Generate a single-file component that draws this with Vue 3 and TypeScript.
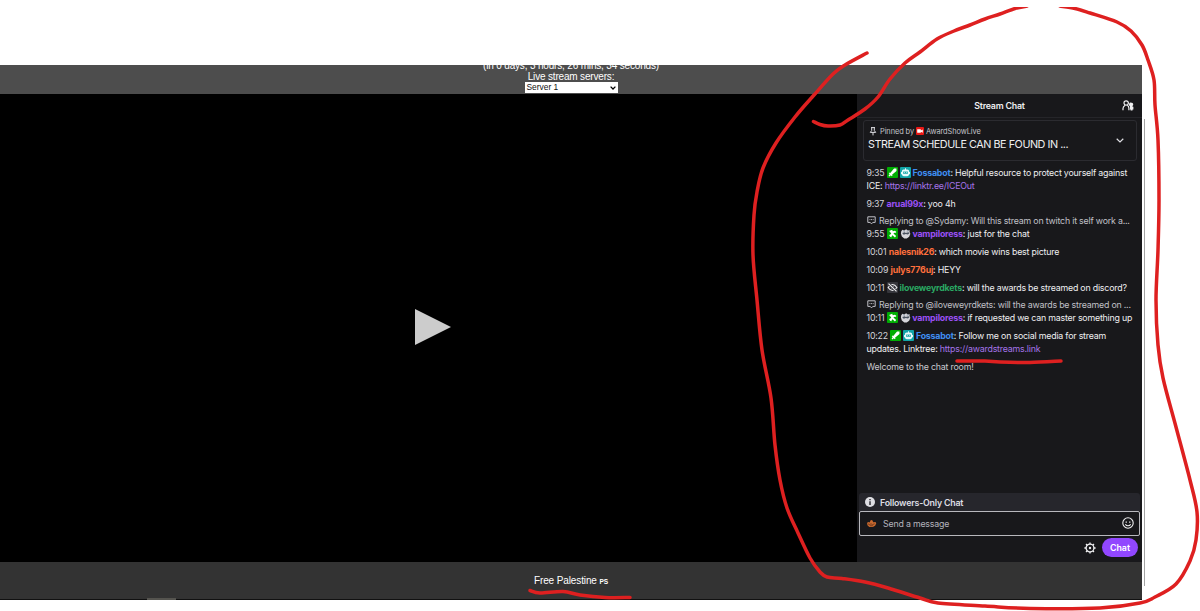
<script setup lang="ts">
import { ref } from "vue";
defineOptions({ name: "StreamPage" });

type Badge = "sword" | "bot" | "puzzle" | "raccoon" | "muted";
interface ChatMessage {
  time: string;
  user: string;
  color: string;
  badges: Badge[];
  text: string;
  link?: string;
  reply?: string;
}
type Point = [number, number];

const server = ref("Server 1");
const draft = ref("");

const messages: ChatMessage[] = [
  {
    time: "9:35",
    user: "Fossabot",
    color: "blue",
    badges: ["sword", "bot"],
    text: "Helpful resource to protect yourself against ICE: ",
    link: "https://linktr.ee/ICEOut",
  },
  { time: "9:37", user: "arual99x", color: "purple", badges: [], text: "yoo 4h" },
  {
    time: "9:55",
    user: "vampiloress",
    color: "purple",
    badges: ["puzzle", "raccoon"],
    text: "just for the chat",
    reply: "Replying to @Sydamy: Will this stream on twitch it self work a...",
  },
  { time: "10:01", user: "nalesnik26", color: "orange", badges: [], text: "which movie wins best picture" },
  { time: "10:09", user: "julys776uj", color: "orange", badges: [], text: "HEYY" },
  { time: "10:11", user: "iloveweyrdkets", color: "green", badges: ["muted"], text: "will the awards be streamed on discord?" },
  {
    time: "10:11",
    user: "vampiloress",
    color: "purple",
    badges: ["puzzle", "raccoon"],
    text: "if requested we can master something up",
    reply: "Replying to @iloveweyrdkets: will the awards be streamed on ...",
  },
  {
    time: "10:22",
    user: "Fossabot",
    color: "blue",
    badges: ["sword", "bot"],
    text: "Follow me on social media for stream updates. Linktree: ",
    link: "https://awardstreams.link",
  },
];

// freehand marker strokes
const strokes: Point[][] = [
  [
    [867, 53], [845, 65], [833, 74], [814, 95], [795, 117], [776, 143], [763, 168], [757, 192], [754, 215],
    [753, 255], [757, 300], [762, 350], [771, 398], [775, 445], [780, 480], [787, 508], [798, 533], [810, 558],
    [820, 572], [827, 577], [842, 578.5], [865, 582], [888, 588], [920, 598], [938, 603], [985, 606], [1030, 608.5],
    [1100, 608], [1140, 603], [1155, 597], [1176, 584], [1190, 561], [1196, 540], [1197, 512], [1190, 480],
    [1176, 427], [1163, 378], [1158, 345], [1156, 300], [1158, 250], [1159, 200], [1158, 140], [1155, 105],
    [1154, 80], [1148, 60], [1142, 45], [1131, 31], [1117, 22], [1090, 13], [1075, 8.5], [1060, 6],
  ],
  [
    [1027, 6], [1015, 8.5], [1000, 14], [985, 19], [970, 25], [954, 31], [937, 39], [920, 52], [905, 63], [890, 79],
    [878, 97], [865, 109], [848, 120], [840, 125], [828, 126], [820, 124.5], [813.5, 121.5],
  ],
  [[957, 361], [985, 361], [1000, 362], [1030, 362.5], [1061, 361]],
  [[530, 590.5], [540, 593], [563, 591.5], [580, 595], [605, 597.5], [630, 597.5]],
];

// smooth a list of points into cubic segments
const toPath = (pts: Point[]) => {
  let d = `M${pts[0][0]} ${pts[0][1]}`;
  for (let i = 0; i < pts.length - 1; i++) {
    const a = pts[i - 1] ?? pts[i];
    const b = pts[i];
    const c = pts[i + 1];
    const e = pts[i + 2] ?? c;
    d += ` C${b[0] + (c[0] - a[0]) / 6} ${b[1] + (c[1] - a[1]) / 6} ${c[0] - (e[0] - b[0]) / 6} ${c[1] - (e[1] - b[1]) / 6} ${c[0]} ${c[1]}`;
  }
  return d;
};
const paths = strokes.map(toPath);
</script>

<template>
  <div class="screen">
    <div class="page">
      <header class="top">
        <div class="line">(in 0 days, 3 hours, 26 mins, 34 seconds)</div>
        <div class="line">Live stream servers:</div>
        <label class="server">
          <span>{{ server }}</span>
          <svg viewBox="0 0 6 4"><path d="M.6 .6 3 3 5.4 .6" /></svg>
        </label>
      </header>

      <main class="stage">
        <div class="player">
          <svg class="play" viewBox="0 0 36 36"><path d="M0 0 36 18 0 36z" /></svg>
        </div>

        <aside class="chat">
          <div class="chat-head">
            <span class="title">Stream Chat</span>
            <svg class="community" viewBox="0 0 12 11">
              <circle cx="4.2" cy="3" r="2.2" />
              <path d="M1 10.3V8.4C1 6.900 2 6 3.200 5.300M5.300 5.300C6.400 6 6.900 6.900 6.900 8.200v2.100" />
              <path class="solid" d="M9.600 2.800a1.700 1.700 0 0 1 .9 3.100v.9h.9v2.700h-.9v.9H8.600V9.500H8V6.200A1.800 1.800 0 0 1 9.600 2.800z" />
            </svg>
          </div>

          <div class="pinned">
            <div class="pinned-body">
              <div class="pinned-by">
                <svg class="pin" viewBox="0 0 8 9">
                  <path d="M2 .6h4M2.7 .6v2.9L1.3 5.4h5.4L5.3 3.5V.6M4 5.4v3" />
                </svg>
                <span>Pinned by</span>
                <svg class="cam" viewBox="0 0 8 8">
                  <rect width="8" height="8" rx="1" fill="#e91916" />
                  <path d="M1.2 2.2h3.6v1.2l2-1v3.3l-2-1v1.1H1.2z" fill="#fff" />
                </svg>
                <span>AwardShowLive</span>
              </div>
              <div class="pinned-text">STREAM SCHEDULE CAN BE FOUND IN ...</div>
            </div>
            <svg class="chevron" viewBox="0 0 8 5"><path d="M.7 .8 4 4 7.3 .8" /></svg>
          </div>

          <div class="messages">
            <div v-for="(m, i) in messages" :key="i" class="message">
              <div v-if="m.reply" class="reply">
                <svg viewBox="0 0 9 9">
                  <path d="M.8 .8h7.4v5.6H5.8L4.5 7.9 3.2 6.4H.8z" />
                  <path d="M2.5 3.6h.9M4.1 3.6H5M5.7 3.6h.9" />
                </svg>
                <span>{{ m.reply }}</span>
              </div>
              <div class="body">
                <span class="time">{{ m.time }}</span>
                <svg v-for="b in m.badges" :key="b" class="badge" viewBox="0 0 18 18">
                  <template v-if="b === 'sword'">
                    <rect width="18" height="18" rx="1.5" fill="#00ad03" />
                    <path d="M15.5 2.5v4L8.2 12.7l1 1-1.4 1.4-1.6-1.6-2 2-1.7-1.7 2-2-1.600-1.600 1.400-1.400 1 1L11.500 2.500z" fill="#fff" />
                  </template>
                  <template v-else-if="b === 'bot'">
                    <rect width="18" height="18" rx="1.5" fill="#12a5a8" />
                    <path d="M8.2 2h1.6v2.2H12a3 3 0 0 1 3 3v.8h1.3v4H15a3 3 0 0 1-3 3H6a3 3 0 0 1-3-3H1.7V8H3v-.8a3 3 0 0 1 3-3h2.2z" fill="#e8fbfb" />
                    <path d="M5 7.5h8v3.5H5z" fill="#12a5a8" />
                    <path d="M6.2 8.5h1.6v1.5H6.2zM10.2 8.5h1.6v1.5h-1.6z" fill="#fff" />
                  </template>
                  <template v-else-if="b === 'puzzle'">
                    <rect width="18" height="18" rx="1.5" fill="#00ad03" />
                    <path d="M3.500 5 8.500 3l1 2.500 3.500-1 2.500 2-2 1.500-1.500-.3-1.500 1.500 4.500 4-2 2.300-4-3.500-1.300 1-.2 2.200-2.500-.7-1.500-3 2-.8 1.500-1.700z" fill="#fff" />
                  </template>
                  <template v-else-if="b === 'raccoon'">
                    <path d="M2 5.5 4 3l3 1.200L10 2l3 2 3-.5-.5 3 1.5 3-2 5-4 2.500H7l-4-3L1.500 9z" fill="#d5d5da" />
                    <path d="M3.500 8.300 8 7l1.200 1.200L14 7l1.500 1.500-2.500 2.300-3.500-.8L6 11z" fill="#4a5360" />
                    <path d="M5 4.500 8 5.500M11 5.200l3-.5" stroke="#7b8ca3" stroke-width="1.3" />
                  </template>
                  <template v-else>
                    <rect width="18" height="18" rx="1.5" fill="#35353b" />
                    <path d="M1.800 9S5 4.200 9 4.200 16.200 9 16.200 9 13 13.800 9 13.800 1.800 9 1.800 9z" fill="none" stroke="#f0f0f2" stroke-width="1.8" />
                    <circle cx="9" cy="9" r="2.3" fill="#f0f0f2" />
                    <path d="M2.5 2.5l13 13" stroke="#35353b" stroke-width="4" />
                    <path d="M2.5 2.5l13 13" stroke="#f0f0f2" stroke-width="1.8" />
                  </template>
                </svg>
                <span class="user" :class="m.color">{{ m.user }}</span>: {{ m.text }}<span v-if="m.link" class="link">{{ m.link }}</span>
              </div>
            </div>
            <div class="message welcome">Welcome to the chat room!</div>
          </div>

          <div class="mode">
            <svg viewBox="0 0 10 10">
              <circle cx="5" cy="5" r="5" fill="#dedee3" />
              <path d="M4.3 2h1.4v1.3H4.3zM4.3 4.2h1.4V8H4.3z" fill="#26262c" />
            </svg>
            <span>Followers-Only Chat</span>
          </div>
          <div class="composer">
            <svg class="identity" viewBox="0 0 12 10">
              <path d="M1 4.2 3 3.4 4 4l1-2.500 1.700-.3L8 3.500l2.500-.3.8 1.500-1.300 2.800L7.500 9h-4L1.500 7z" fill="#c8692e" />
              <path d="M2 5.500l2 .6 1.500-.8 1.500 1 2.500-1M4 7.500h3.500" fill="none" stroke="#5c2c18" stroke-width=".8" />
            </svg>
            <input v-model="draft" type="text" placeholder="Send a message" />
            <svg class="smile" viewBox="0 0 12 12">
              <circle cx="6" cy="6" r="5.2" />
              <path d="M3.4 7.200C4 8.400 5 8.800 6 8.800s2-.4 2.600-1.600" />
              <path class="eyes" d="M3.600 4.400h1.300v1.300H3.600zM7.100 4.400h1.300v1.300H7.100z" />
            </svg>
          </div>
          <div class="actions">
            <svg class="gear" viewBox="0 0 12 12">
              <circle cx="6" cy="6" r="3.9" />
              <circle class="dot" cx="6" cy="6" r="1.2" />
              <path d="M6 .4v1.700M6 9.900v1.700M.4 6h1.700M9.900 6h1.700M2 2l1.200 1.200M8.800 8.800 10 10M10 2 8.800 3.200M3.200 8.800 2 10" />
            </svg>
            <button class="send">Chat</button>
          </div>
        </aside>
      </main>

      <footer class="bottom">
        <span>Free Palestine <small>PS</small></span>
        <i class="status"></i>
      </footer>
    </div>
    <div class="scroll-edge"></div>

    <svg class="marker" viewBox="0 0 1200 611">
      <clipPath id="sheet"><rect y="7" width="1200" height="604" /></clipPath>
      <g clip-path="url(#sheet)">
        <path v-for="d in paths" :key="d" :d="d" />
      </g>
    </svg>
  </div>
</template>

<style>
body {
  background: #fff;
  overflow: hidden;
}
</style>

<style scoped>
* {
  box-sizing: border-box;
}

.screen {
  position: relative;
  display: flex;
  width: 1200px;
  height: 611px;
  padding-top: 65px;
  background: #fff;
  overflow: hidden;
}

.page {
  width: 1142px;
  height: 535px;
  display: flex;
  flex-direction: column;
}

.top {
  height: 29px;
  flex: none;
  display: flex;
  flex-direction: column;
  align-items: center;
  justify-content: flex-end;
  overflow: hidden;
  background: #4d4d4d;
  color: #fff;
  font-family: "Liberation Sans", Arial, sans-serif;
  font-size: 10px;
  letter-spacing: -0.17px;
}

.line {
  flex: none;
  height: 10.5px;
  line-height: 10.5px;
}

.server {
  flex: none;
  width: 93px;
  height: 11px;
  margin-bottom: 1px;
  padding: 0 2px;
  display: flex;
  align-items: center;
  justify-content: space-between;
  background: #fff;
  color: #111;
  font-size: 8.4px;
  letter-spacing: 0;
  line-height: 11px;

  & svg {
    width: 6px;
    height: 4px;
    fill: none;
    stroke: #000;
    stroke-width: 1.3;
  }
}

.stage {
  height: 468px;
  flex: none;
  display: flex;
}

.player {
  width: 857px;
  display: flex;
  align-items: center;
  justify-content: center;
  padding: 0 0 2px 9px;
  background: #000;
}

.play {
  width: 36px;
  height: 36px;
  fill: #ccc;
}

.chat {
  width: 285px;
  display: flex;
  flex-direction: column;
  background: #18181b;
  color: #efeff1;
  font-family: Inter, sans-serif;
  font-size: 8.8px;
  letter-spacing: -0.19px;
}

.chat-head {
  height: 24px;
  flex: none;
  padding: 0 8px 0 20px;
  display: flex;
  align-items: center;
  border-bottom: 1px solid #252529;
}

.title {
  flex: 1;
  text-align: center;
  font-weight: 600;
}

.community {
  width: 12px;
  height: 11px;
  fill: none;
  stroke: #efeff1;
  stroke-width: 1.2;

  & .solid {
    fill: #efeff1;
    stroke: none;
  }
}

.pinned {
  height: 41px;
  flex: none;
  margin: 2px 5px 0 6px;
  padding: 4px 12px 0 4px;
  display: flex;
  border: 1px solid #2b2b30;
  border-radius: 3px;
}

.pinned-body {
  flex: 1;
}

.pinned-by {
  height: 12px;
  display: flex;
  align-items: center;
  gap: 2px;
  color: #c4c4ca;
  font-size: 7.4px;
  letter-spacing: -0.08px;
}

.pin {
  width: 8px;
  height: 9px;
  margin: 0 1px 0 1px;
  fill: none;
  stroke: #dedee3;
  stroke-width: 1;
}

.cam {
  width: 8px;
  height: 8px;
}

.pinned-text {
  padding-top: 1px;
  line-height: 14px;
  font-size: 10.8px;
  letter-spacing: -0.46px;
  white-space: nowrap;
}

.chevron {
  width: 8px;
  height: 5px;
  margin-top: 13px;
  fill: none;
  stroke: #dedee3;
  stroke-width: 1.2;
}

.messages {
  flex: 1;
  padding: 2px 6px 0 9.5px;
}

.message {
  padding: 2.5px 0;
  line-height: 13px;
}

.reply {
  height: 12px;
  display: flex;
  align-items: center;
  gap: 3.5px;
  color: #c0c0c7;
  line-height: 12px;
  white-space: nowrap;

  & svg {
    flex: none;
    width: 9px;
    height: 9px;
    fill: none;
    stroke: #c0c0c7;
    stroke-width: 1;
  }
}

.body {
  height: 13px;
}

.message:first-child .body,
.message:nth-child(8) .body {
  height: 26px;
}

.time {
  margin-right: 2.4px;
  color: #d3d3d9;
}

.badge {
  width: 11px;
  height: 11px;
  margin-right: 1.8px;
  vertical-align: -2.5px;
}

.user {
  font-weight: 700;
}

.blue {
  color: #3f8df0;
}

.purple {
  color: #9b50f5;
}

.orange {
  color: #ff6f3d;
}

.green {
  color: #2aa963;
}

.link {
  color: #a574e8;
}

.welcome {
  color: #c8c8cf;
}

.mode {
  height: 18px;
  flex: none;
  margin: 0 2px 0 2px;
  padding-left: 6px;
  display: flex;
  align-items: center;
  gap: 5px;
  border-radius: 3px 3px 0 0;
  background: #26262c;
  color: #dedee3;
  font-weight: 600;

  & svg {
    width: 10px;
    height: 10px;
  }
}

.composer {
  height: 25px;
  flex: none;
  margin: 0 2px;
  padding: 0 5px 1px 6px;
  display: flex;
  align-items: center;
  border: 1px solid #b8b8bd;
  border-radius: 2px;

  & input {
    flex: 1;
    min-width: 0;
    padding: 0 0 0 6px;
    border: none;
    outline: none;
    background: none;
    color: #efeff1;
    font: inherit;
    letter-spacing: inherit;
  }

  & input::placeholder {
    color: #b3b3bb;
  }
}

.identity {
  width: 11px;
  height: 9px;
}

.smile {
  width: 12px;
  height: 12px;
  fill: none;
  stroke: #efeff1;
  stroke-width: 1.1;

  & .eyes {
    fill: #efeff1;
    stroke: none;
  }
}

.actions {
  height: 26px;
  flex: none;
  padding: 2px 4px 0 0;
  display: flex;
  align-items: flex-start;
  justify-content: flex-end;
  gap: 6px;
}

.gear {
  width: 12px;
  height: 12px;
  margin-top: 3.5px;
  fill: none;
  stroke: #efeff1;
  stroke-width: 1.3;

  & .dot {
    fill: #efeff1;
    stroke: none;
  }
}

.send {
  width: 36px;
  height: 19px;
  padding: 0;
  border: none;
  border-radius: 10px;
  background: #9147ff;
  color: #fff;
  font: 600 8.8px Inter, sans-serif;
}

.bottom {
  height: 38px;
  flex: none;
  position: relative;
  display: flex;
  align-items: center;
  justify-content: center;
  border-bottom: 1px solid #111;
  background: #333;
  color: #fff;
  font-family: "Liberation Sans", Arial, sans-serif;
  font-size: 10px;
  letter-spacing: -0.12px;

  & small {
    font-size: 6.6px;
    font-weight: 700;
  }
}

.status {
  position: absolute;
  left: 147px;
  bottom: -1px;
  width: 29px;
  height: 2px;
  background: #55544f;
}

.scroll-edge {
  width: 1px;
  height: 467px;
  margin: 54px 0 0 2px;
  background: #a3a3a3;
}

.marker {
  position: absolute;
  inset: 0;
  width: 1200px;
  height: 611px;
  pointer-events: none;
  fill: none;
  stroke: #de2020;
  stroke-width: 3.5;
  stroke-linecap: round;
  stroke-linejoin: round;
}
</style>
